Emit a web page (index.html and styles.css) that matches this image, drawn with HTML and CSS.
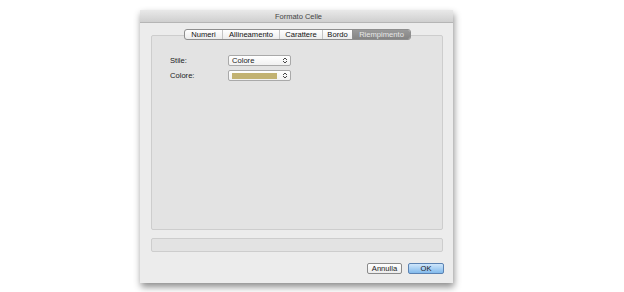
FILE: index.html
```html
<!DOCTYPE html>
<html>
<head>
<meta charset="utf-8">
<link rel="stylesheet" href="styles.css">
</head>
<body>
<div class="window">
  <div class="titlebar">Formato Celle</div>
  <div class="content">
    <div class="tabs">
      <span class="tab t1">Numeri</span>
      <span class="tab t2">Allineamento</span>
      <span class="tab t3">Carattere</span>
      <span class="tab t4">Bordo</span>
      <span class="tab t5 selected">Riempimento</span>
    </div>
    <div class="group">
      <div class="form">
        <span class="label">Stile:</span>
        <span class="popup"><span class="ptext">Colore</span><svg class="arrows" width="6" height="7" viewBox="0 0 6 7"><path d="M1 3 L3 1 L5 3 M1 4 L3 6 L5 4" fill="none" stroke="#333" stroke-width="0.9"/></svg></span>
        <span class="label">Colore:</span>
        <span class="popup"><span class="swatch"></span><svg class="arrows" width="6" height="7" viewBox="0 0 6 7"><path d="M1 3 L3 1 L5 3 M1 4 L3 6 L5 4" fill="none" stroke="#333" stroke-width="0.9"/></svg></span>
      </div>
    </div>
    <div class="status"></div>
    <div class="buttons">
      <span class="btn">Annulla</span>
      <span class="btn ok">OK</span>
    </div>
  </div>
</div>
</body>
</html>
```

FILE: styles.css
```css
html, body {
  margin: 0;
  padding: 0;
  background: #ffffff;
  width: 624px;
  height: 292px;
  overflow: hidden;
}
body {
  font-family: "Liberation Sans", "DejaVu Sans", sans-serif;
  font-size: 8px;
  color: #1a1a1a;
}
.window {
  margin: 10px 0 0 140px;
  width: 313px;
  height: 273px;
  background: #ececec;
  box-shadow: 1px 4px 7px rgba(0,0,0,0.45);
  display: flex;
  flex-direction: column;
}
.titlebar {
  height: 13px;
  line-height: 13px;
  text-align: center;
  font-size: 7.5px;
  color: #444;
  background: linear-gradient(#e9e9e9, #cfcfcf);
  border-bottom: 1px solid #b5b5b5;
  box-sizing: border-box;
  padding-left: 4px;
}
.content {
  flex: 1;
  display: flex;
  flex-direction: column;
  padding: 6px 10px 0 11px;
}
.tabs {
  display: flex;
  align-self: flex-start;
  margin-left: 33px;
  height: 11px;
  margin-bottom: -5px;
  position: relative;
  z-index: 1;
  border: 1px solid #8e8e8e;
  border-radius: 3px;
  box-sizing: border-box;
  overflow: hidden;
  background: linear-gradient(#ffffff, #ececec);
}
.tab {
  display: flex;
  align-items: center;
  justify-content: center;
  font-size: 7.6px;
  color: #111;
  border-left: 1px solid #c4c4c4;
  line-height: 9px;
  box-sizing: border-box;
}
.t1 { width: 37px; border-left: none; }
.t2 { width: 57px; }
.t3 { width: 43px; }
.t4 { width: 30px; }
.t5 { width: 58px; }
.tab.selected {
  background: linear-gradient(#9a9a9a, #848484);
  color: #e8e8e8;
  border-left-color: #8e8e8e;
}
.group {
  height: 195px;
  box-sizing: border-box;
  background: #e3e3e3;
  border: 1px solid #cdcdcd;
  border-radius: 2px;
}
.form {
  display: grid;
  grid-template-columns: 58px 63px;
  row-gap: 4px;
  padding: 19px 0 0 18px;
  align-items: center;
}
.label {
  font-size: 7.6px;
  color: #1a1a1a;
}
.popup {
  height: 11px;
  box-sizing: border-box;
  border: 1px solid #a9a9a9;
  border-radius: 2px;
  background: linear-gradient(#ffffff, #f1f1f1);
  display: flex;
  align-items: center;
  padding-left: 3px;
  padding-right: 2px;
}
.ptext {
  font-size: 7.6px;
  flex: 1;
}
.swatch {
  width: 45px;
  height: 6px;
  background: #c2b272;
  flex: none;
  margin-right: auto;
}
.arrows {
  flex: none;
  display: block;
}
.status {
  margin-top: 8px;
  height: 14px;
  box-sizing: border-box;
  background: #e3e3e3;
  border: 1px solid #cdcdcd;
  border-radius: 2px;
}
.buttons {
  display: flex;
  justify-content: flex-end;
  gap: 6px;
  margin-top: 11px;
  margin-right: -1px;
}
.btn {
  width: 35px;
  height: 11px;
  box-sizing: border-box;
  border: 1px solid #8a8a8a;
  border-radius: 2px;
  background: linear-gradient(#ffffff, #ececec);
  font-size: 7.6px;
  display: flex;
  align-items: center;
  justify-content: center;
}
.btn.ok {
  width: 36px;
  background: linear-gradient(#cfe6fb, #82baec);
  border-color: #5b82b2;
}
```
